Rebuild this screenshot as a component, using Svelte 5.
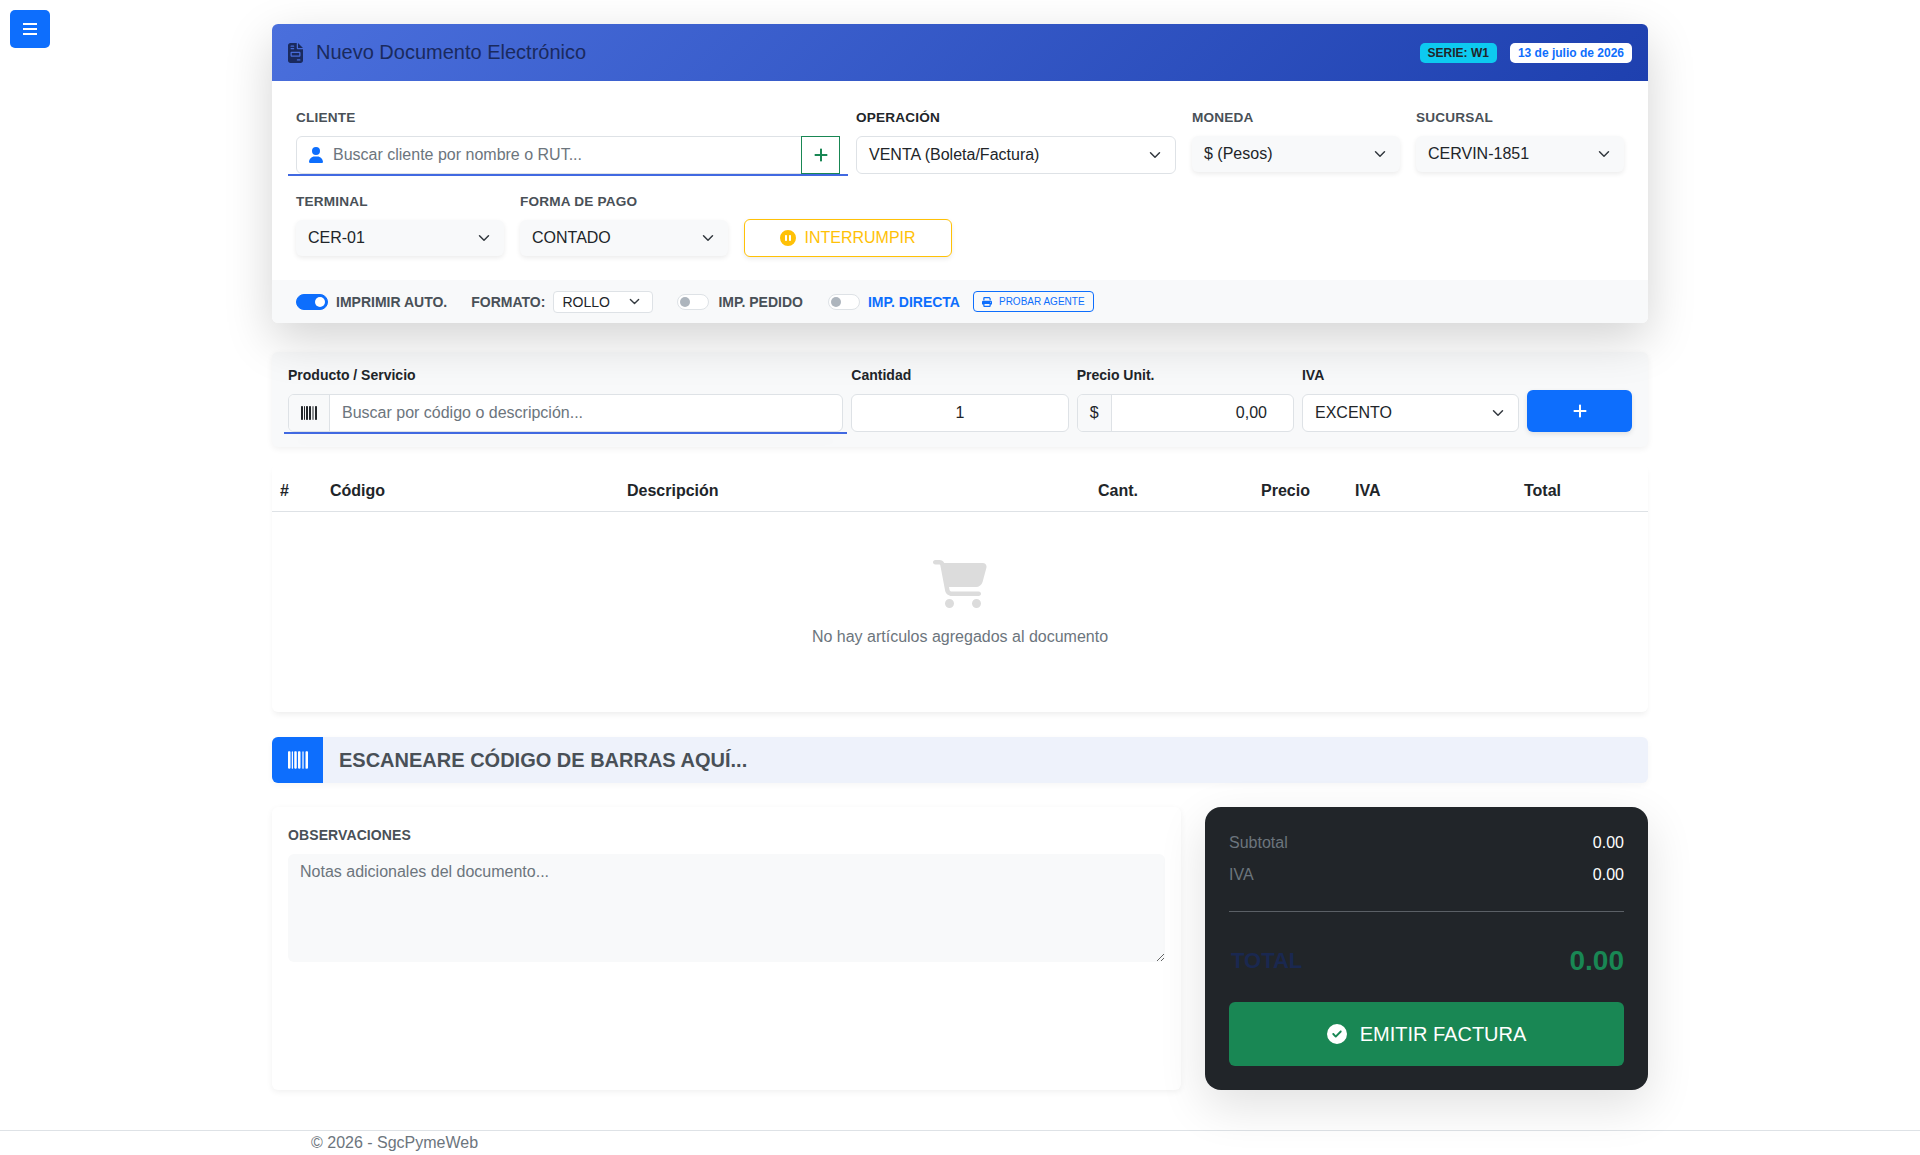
<script lang="ts">
	const columns = [
		{ name: '#', width: 50 },
		{ name: 'Código', width: 297 },
		{ name: 'Descripción', width: 471 },
		{ name: 'Cant.', width: 163 },
		{ name: 'Precio', width: 94 },
		{ name: 'IVA', width: 169 },
		{ name: 'Total', width: 124 }
	];
	const chevron = 'M2 5l6 6 6-6';
	const barcode = 'M24 32C10.7 32 0 42.7 0 56V456c0 13.3 10.7 24 24 24H40c13.3 0 24-10.7 24-24V56c0-13.3-10.7-24-24-24H24zm88 0c-8.8 0-16 7.2-16 16V464c0 8.8 7.2 16 16 16s16-7.2 16-16V48c0-8.8-7.2-16-16-16zm72 0c-13.3 0-24 10.7-24 24V456c0 13.3 10.7 24 24 24h16c13.3 0 24-10.7 24-24V56c0-13.3-10.7-24-24-24H184zm96 0c-13.3 0-24 10.7-24 24V456c0 13.3 10.7 24 24 24h16c13.3 0 24-10.7 24-24V56c0-13.3-10.7-24-24-24H280zM448 56V456c0 13.3 10.7 24 24 24h16c13.3 0 24-10.7 24-24V56c0-13.3-10.7-24-24-24H472c-13.3 0-24 10.7-24 24zm-64-24c-8.8 0-16 7.2-16 16V464c0 8.8 7.2 16 16 16s16-7.2 16-16V48c0-8.8-7.2-16-16-16z';
	const plus = 'M256 80c0-17.7-14.3-32-32-32s-32 14.3-32 32V224H48c-17.7 0-32 14.3-32 32s14.3 32 32 32H192V432c0 17.7 14.3 32 32 32s32-14.3 32-32V288H400c17.7 0 32-14.3 32-32s-14.3-32-32-32H256V80z';
</script>

{#snippet select(value: string, cls: string)}
	<div class="select {cls}">
		<span>{value}</span>
		<svg class="chev" viewBox="0 0 16 16"><path d={chevron} /></svg>
	</div>
{/snippet}

<button class="menu-btn" aria-label="menu">
	<svg viewBox="0 0 14 12"><rect y="0" width="14" height="2" /><rect y="5" width="14" height="2" /><rect y="10" width="14" height="2" /></svg>
</button>

<main class="page">
	<section class="doc-card">
		<header class="doc-head">
			<svg class="doc-icon" viewBox="0 0 384 512"><path d="M64 0C28.7 0 0 28.7 0 64V448c0 35.3 28.7 64 64 64H320c35.3 0 64-28.7 64-64V160H256c-17.7 0-32-14.3-32-32V0H64zM256 0V128H384L256 0zM80 64h64c8.8 0 16 7.2 16 16s-7.2 16-16 16H80c-8.8 0-16-7.2-16-16s7.2-16 16-16zm0 64h64c8.8 0 16 7.2 16 16s-7.2 16-16 16H80c-8.8 0-16-7.2-16-16s7.2-16 16-16zm16 96H288c17.7 0 32 14.3 32 32v64c0 17.7-14.3 32-32 32H96c-17.7 0-32-14.3-32-32V256c0-17.7 14.3-32 32-32zm0 32v64H288V256H96zM240 416h64c8.8 0 16 7.2 16 16s-7.2 16-16 16H240c-8.8 0-16-7.2-16-16s7.2-16 16-16z" /></svg>
			<h1>Nuevo Documento Electrónico</h1>
			<span class="badge serie">SERIE: W1</span>
			<span class="badge fecha">13 de julio de 2026</span>
		</header>

		<div class="doc-body">
			<div class="field c5 underlined">
				<span class="lbl">CLIENTE</span>
				<div class="client-group">
					<svg class="user-icon" viewBox="0 0 448 512"><path d="M224 256A128 128 0 1 0 224 0a128 128 0 1 0 0 256zm-45.7 48C79.8 304 0 383.8 0 482.3C0 498.7 13.3 512 29.7 512H418.3c16.4 0 29.7-13.3 29.7-29.7C448 383.8 368.2 304 269.7 304H178.3z" /></svg>
					<input placeholder="Buscar cliente por nombre o RUT..." />
					<button class="add-client" aria-label="nuevo cliente">
						<svg viewBox="0 0 448 512"><path d={plus} /></svg>
					</button>
				</div>
			</div>
			<div class="field c3">
				<span class="lbl dark">OPERACIÓN</span>
				{@render select('VENTA (Boleta/Factura)', 'outlined')}
			</div>
			<div class="field c2">
				<span class="lbl">MONEDA</span>
				{@render select('$ (Pesos)', 'soft')}
			</div>
			<div class="field c2">
				<span class="lbl">SUCURSAL</span>
				{@render select('CERVIN-1851', 'soft')}
			</div>
			<div class="field c2">
				<span class="lbl">TERMINAL</span>
				{@render select('CER-01', 'soft')}
			</div>
			<div class="field c2">
				<span class="lbl">FORMA DE PAGO</span>
				{@render select('CONTADO', 'soft')}
			</div>
			<div class="field c2 action">
				<button class="pause-btn">
					<svg viewBox="0 0 512 512"><path d="M256 512A256 256 0 1 0 256 0a256 256 0 1 0 0 512zM224 192V320c0 17.7-14.3 32-32 32s-32-14.3-32-32V192c0-17.7 14.3-32 32-32s32 14.3 32 32zm128 0V320c0 17.7-14.3 32-32 32s-32-14.3-32-32V192c0-17.7 14.3-32 32-32s32 14.3 32 32z" /></svg>
					INTERRUMPIR
				</button>
			</div>
		</div>

		<div class="doc-options">
			<span class="switch on"></span>
			<span class="opt-lbl first">IMPRIMIR AUTO.</span>
			<span class="opt-lbl formato">FORMATO:</span>
			<div class="mini-select">
				<span>ROLLO</span>
				<svg class="chev" viewBox="0 0 16 16"><path d={chevron} /></svg>
			</div>
			<span class="switch sw2"></span>
			<span class="opt-lbl wide">IMP. PEDIDO</span>
			<span class="switch sw3"></span>
			<span class="opt-lbl blue">IMP. DIRECTA</span>
			<button class="agent-btn">
				<svg viewBox="0 0 512 512"><path d="M128 0C92.7 0 64 28.7 64 64v96h64V64H354.7L384 93.3V160h64V93.3c0-17-6.7-33.3-18.7-45.3L400 18.7C388 6.7 371.7 0 354.7 0H128zM384 352v32 64H128V384 368 352H384zm64 32h32c17.7 0 32-14.3 32-32V256c0-35.3-28.7-64-64-64H64c-35.3 0-64 28.7-64 64v96c0 17.7 14.3 32 32 32H64v64c0 35.3 28.7 64 64 64H384c35.3 0 64-28.7 64-64V384zM432 248a24 24 0 1 1 0 48 24 24 0 1 1 0-48z" /></svg>
				PROBAR AGENTE
			</button>
		</div>
	</section>

	<section class="line-panel">
		<div class="line-col underlined-2">
			<span class="line-lbl">Producto / Servicio</span>
			<div class="group">
				<span class="addon bar"><svg viewBox="0 0 512 512"><path d={barcode} /></svg></span>
				<input placeholder="Buscar por código o descripción..." />
			</div>
		</div>
		<div class="line-col">
			<span class="line-lbl">Cantidad</span>
			<div class="group"><input class="center" value="1" /></div>
		</div>
		<div class="line-col">
			<span class="line-lbl">Precio Unit.</span>
			<div class="group">
				<span class="addon dollar">$</span>
				<input class="right" value="0,00" />
			</div>
		</div>
		<div class="line-col">
			<span class="line-lbl">IVA</span>
			{@render select('EXCENTO', 'outlined')}
		</div>
		<div class="line-col end">
			<button class="add-line" aria-label="agregar">
				<svg viewBox="0 0 448 512"><path d={plus} /></svg>
			</button>
		</div>
	</section>

	<section class="items">
		<div class="items-head">
			{#each columns as col}
				<span style="width: {col.width}px">{col.name}</span>
			{/each}
		</div>
		<div class="items-empty">
			<svg viewBox="0 0 576 512"><path d="M0 24C0 10.7 10.7 0 24 0H69.5c22 0 41.5 12.8 50.6 32h411c26.3 0 45.5 25 38.6 50.4l-41 152.3c-8.5 31.4-37 53.3-69.5 53.3H170.7l5.4 28.5c2.2 11.3 12.1 19.5 23.6 19.5H488c13.3 0 24 10.7 24 24s-10.7 24-24 24H199.7c-34.6 0-64.3-24.6-70.7-58.5L77.4 54.5c-.7-3.8-4-6.5-7.9-6.5H24C10.7 48 0 37.3 0 24zM128 464a48 48 0 1 1 96 0 48 48 0 1 1 -96 0zm336-48a48 48 0 1 1 0 96 48 48 0 1 1 0-96z" /></svg>
			<p>No hay artículos agregados al documento</p>
		</div>
	</section>

	<section class="scan-bar">
		<span class="scan-icon"><svg viewBox="0 0 512 512"><path d={barcode} /></svg></span>
		<span class="scan-text">ESCANEARE CÓDIGO DE BARRAS AQUÍ...</span>
	</section>

	<section class="bottom">
		<div class="notes">
			<span class="lbl">OBSERVACIONES</span>
			<textarea placeholder="Notas adicionales del documento..."></textarea>
		</div>
		<div class="totals">
			<div class="tot-row"><span class="muted">Subtotal</span><span>0.00</span></div>
			<div class="tot-row"><span class="muted">IVA</span><span>0.00</span></div>
			<hr />
			<div class="tot-main"><span class="tot-label">TOTAL</span><span class="tot-value">0.00</span></div>
			<button class="emit">
				<svg viewBox="0 0 512 512"><path d="M256 512A256 256 0 1 0 256 0a256 256 0 1 0 0 512zM369 209L241 337c-9.4 9.4-24.6 9.4-33.9 0l-64-64c-9.4-9.4-9.4-24.6 0-33.9s24.6-9.4 33.9 0l47 47L335 175c9.4-9.4 24.6-9.4 33.9 0s9.4 24.6 0 33.9z" /></svg>
				EMITIR FACTURA
			</button>
		</div>
	</section>
</main>

<footer class="foot">© 2026 - SgcPymeWeb</footer>

<style>
	:global(body) {
		margin: 0;
		background: #fff;
		color: #212529;
		font-family: 'Liberation Sans', Arial, sans-serif;
		font-size: 16px;
	}

	button {
		font-family: inherit;
		cursor: pointer;
	}

	input,
	textarea {
		font-family: inherit;
		font-size: 16px;
		color: #212529;
		outline: none;
	}

	input::placeholder,
	textarea::placeholder {
		color: #6c757d;
		opacity: 1;
	}

	.menu-btn {
		position: absolute;
		left: 10px;
		top: 10px;
		width: 40px;
		height: 38px;
		padding: 0;
		border: 0;
		border-radius: 5px;
		background: #0d6efd;
		display: flex;
		align-items: center;
		justify-content: center;
	}

	.menu-btn svg {
		width: 14px;
		height: 12px;
		fill: #fff;
	}

	.page {
		width: 1376px;
		margin: 0 auto;
		padding-top: 24px;
	}

	.doc-card {
		position: relative;
		z-index: 1;
		border-radius: 6px;
		background: #fff;
		box-shadow: 0 16px 48px rgba(0, 0, 0, 0.175);
		overflow: hidden;
	}

	.doc-head {
		height: 57px;
		box-sizing: border-box;
		padding: 0 16px;
		display: flex;
		align-items: center;
		background: linear-gradient(135deg, #4a6fdc, #1e40af);
		color: #1a2a5e;
	}

	.doc-icon {
		width: 15px;
		height: 20px;
		fill: #1a2a5e;
		margin-right: 13px;
	}

	.doc-head h1 {
		margin: 0;
		font-size: 20px;
		font-weight: 400;
		flex: 1;
	}

	.badge {
		height: 20px;
		line-height: 20px;
		border-radius: 5px;
		padding: 0 8px;
		font-size: 12px;
		font-weight: 700;
	}

	.serie {
		background: #0dcaf0;
		color: #212529;
		margin-right: 13px;
	}

	.fecha {
		background: #fff;
		color: #0d6efd;
	}

	.doc-body {
		display: grid;
		grid-template-columns: repeat(12, 1fr);
		padding: 27px 16px 0;
		height: 199px;
		box-sizing: border-box;
		align-content: start;
		row-gap: 18px;
	}

	.field {
		padding: 0 8px;
		position: relative;
	}

	.c5 {
		grid-column: span 5;
	}

	.c3 {
		grid-column: span 3;
	}

	.c2 {
		grid-column: span 2;
	}

	.action {
		padding-top: 27px;
	}

	.lbl {
		display: block;
		font-size: 13.6px;
		line-height: 20px;
		font-weight: 700;
		color: #495057;
		letter-spacing: 0.2px;
		margin-bottom: 8px;
	}

	.lbl.dark {
		color: #212529;
	}

	.client-group {
		height: 38px;
		box-sizing: border-box;
		border: 1px solid #dee2e6;
		border-radius: 6px;
		display: flex;
		align-items: center;
		background: #fff;
	}

	.user-icon {
		width: 14px;
		height: 16px;
		fill: #0d6efd;
		margin-left: 12px;
		margin-right: 10px;
		flex: none;
	}

	.client-group input {
		flex: 1;
		min-width: 0;
		border: 0;
		padding: 0;
		background: transparent;
	}

	.add-client {
		width: 39px;
		height: 38px;
		margin: -1px;
		padding: 0;
		border: 1px solid #198754;
		border-radius: 0;
		background: #fff;
		display: flex;
		align-items: center;
		justify-content: center;
	}

	.add-client svg {
		width: 14px;
		height: 16px;
		fill: #198754;
	}

	.underlined::after {
		content: '';
		position: absolute;
		left: 0;
		right: 0;
		bottom: -2px;
		height: 2px;
		background: #4169e1;
	}

	.select {
		height: 38px;
		box-sizing: border-box;
		border-radius: 6px;
		display: flex;
		align-items: center;
		justify-content: space-between;
		padding: 0 14px 0 12px;
		font-size: 16px;
		color: #212529;
	}

	.select.outlined {
		border: 1px solid #dee2e6;
		background: #fff;
	}

	.select.soft {
		height: 36px;
		background: #f8f9fa;
		box-shadow: 0 2px 5px rgba(0, 0, 0, 0.08);
	}

	.chev {
		width: 12px;
		height: 12px;
		fill: none;
		stroke: #343a40;
		stroke-width: 2;
		stroke-linecap: round;
		stroke-linejoin: round;
		flex: none;
	}

	.pause-btn {
		width: 100%;
		height: 38px;
		padding: 0;
		border: 1px solid #ffc107;
		border-radius: 6px;
		background: #fff;
		color: #ffc107;
		font-size: 16px;
		display: flex;
		align-items: center;
		justify-content: center;
		box-shadow: 0 2px 5px rgba(0, 0, 0, 0.08);
	}

	.pause-btn svg {
		width: 16px;
		height: 16px;
		fill: #ffc107;
		margin-right: 8px;
	}

	.doc-options {
		height: 43px;
		box-sizing: border-box;
		padding: 0 24px;
		display: flex;
		align-items: center;
		background: #f8f9fa;
	}

	.switch {
		width: 32px;
		height: 16px;
		box-sizing: border-box;
		border: 1px solid #dee2e6;
		border-radius: 8px;
		background: #fff;
		position: relative;
		flex: none;
	}

	.switch::after {
		content: '';
		position: absolute;
		left: 2px;
		top: 2px;
		width: 10px;
		height: 10px;
		border-radius: 50%;
		background: #adb5bd;
	}

	.switch.on {
		background: #0d6efd;
		border-color: #0d6efd;
	}

	.switch.on::after {
		left: 18px;
		background: #fff;
	}

	.sw2 {
		margin-left: 24px;
	}

	.sw3 {
		margin-left: 25px;
	}

	.opt-lbl {
		font-size: 14px;
		font-weight: 700;
		color: #495057;
		margin-left: 8px;
	}

	.opt-lbl.wide {
		margin-left: 9px;
	}

	.opt-lbl.formato {
		margin-left: 24px;
		margin-top: 1px;
	}

	.opt-lbl.blue {
		color: #0d6efd;
	}

	.mini-select {
		width: 100px;
		height: 22px;
		box-sizing: border-box;
		border: 1px solid #dee2e6;
		border-radius: 4px;
		background: #fff;
		margin-left: 8px;
		padding: 0 12px 0 8px;
		display: flex;
		align-items: center;
		justify-content: space-between;
		font-size: 14px;
	}

	.mini-select .chev {
		width: 11px;
		height: 11px;
	}

	.agent-btn {
		height: 21px;
		margin-left: 13px;
		padding: 0 8px;
		border: 1px solid #0d6efd;
		border-radius: 4px;
		background: transparent;
		color: #0d6efd;
		font-size: 10px;
		display: flex;
		align-items: center;
	}

	.agent-btn svg {
		width: 10px;
		height: 10px;
		fill: #0d6efd;
		margin-right: 7px;
	}

	.line-panel {
		margin-top: 29px;
		height: 95px;
		box-sizing: border-box;
		padding: 12px 12px 0;
		border-radius: 6px;
		background: #f8f9fa;
		box-shadow: 0 2px 6px rgba(0, 0, 0, 0.06);
		display: grid;
		grid-template-columns: 5fr 2fr 2fr 2fr 1fr;
		position: relative;
	}

	.line-col {
		display: flex;
		flex-direction: column;
		min-width: 0;
		padding: 0 4px;
		position: relative;
	}

	.line-col.end {
		justify-content: flex-end;
		padding-bottom: 15px;
	}

	.underlined-2::after {
		content: '';
		position: absolute;
		left: 0;
		right: 0;
		top: 68px;
		height: 2px;
		background: #4169e1;
		box-shadow: 0 8px 20px rgba(0, 0, 0, 0.05);
	}

	.line-lbl {
		font-size: 14px;
		line-height: 22px;
		font-weight: 700;
		margin-bottom: 8px;
	}

	.group {
		height: 38px;
		box-sizing: border-box;
		border: 1px solid #dee2e6;
		border-radius: 6px;
		background: #fff;
		display: flex;
		overflow: hidden;
	}

	.group input {
		flex: 1;
		min-width: 0;
		border: 0;
		padding: 0 12px;
		background: transparent;
	}

	.group input.center {
		text-align: center;
	}

	.group input.right {
		text-align: right;
		padding-right: 26px;
	}

	.addon {
		background: #f8f9fa;
		border-right: 1px solid #dee2e6;
		display: flex;
		align-items: center;
		justify-content: center;
		flex: none;
	}

	.addon.bar {
		width: 40px;
	}

	.addon.bar svg {
		width: 16px;
		height: 16px;
		fill: #212529;
	}

	.addon.dollar {
		width: 33px;
	}

	.add-line {
		height: 42px;
		padding: 0;
		border: 0;
		border-radius: 6px;
		background: #0d6efd;
		display: flex;
		align-items: center;
		justify-content: center;
		box-shadow: 0 2px 5px rgba(0, 0, 0, 0.1);
	}

	.add-line svg {
		width: 14px;
		height: 16px;
		fill: #fff;
	}

	.items {
		margin-top: 17px;
		height: 248px;
		border-radius: 6px;
		background: #fff;
		box-shadow: 0 4px 6px -2px rgba(0, 0, 0, 0.08);
		overflow: hidden;
	}

	.items-head {
		height: 48px;
		box-sizing: border-box;
		padding: 6px 0 0 8px;
		border-bottom: 1px solid #dee2e6;
		display: flex;
		align-items: center;
		font-weight: 700;
	}

	.items-empty {
		display: flex;
		flex-direction: column;
		align-items: center;
		padding-top: 48px;
	}

	.items-empty svg {
		width: 54px;
		height: 48px;
		fill: #dcdcdc;
	}

	.items-empty p {
		margin: 20px 0 0;
		color: #6c757d;
	}

	.scan-bar {
		margin-top: 25px;
		height: 46px;
		border-radius: 6px;
		background: #eef2fb;
		display: flex;
		align-items: center;
		box-shadow: 0 2px 6px rgba(0, 0, 0, 0.04);
		overflow: hidden;
	}

	.scan-icon {
		width: 51px;
		height: 46px;
		background: #0d6efd;
		display: flex;
		align-items: center;
		justify-content: center;
	}

	.scan-icon svg {
		width: 20px;
		height: 20px;
		fill: #fff;
	}

	.scan-text {
		margin-left: 16px;
		font-size: 20px;
		font-weight: 700;
		color: #495057;
	}

	.bottom {
		margin-top: 24px;
		display: grid;
		grid-template-columns: 909px 443px;
		column-gap: 24px;
		height: 283px;
	}

	.notes {
		padding: 18px 16px 0;
		border-radius: 6px;
		background: #fff;
		box-shadow: 0 2px 6px rgba(0, 0, 0, 0.06);
	}

	.notes .lbl {
		font-size: 14px;
		letter-spacing: 0.1px;
		margin-bottom: 9px;
	}

	.notes textarea {
		display: block;
		width: 100%;
		height: 108px;
		box-sizing: border-box;
		padding: 9px 12px;
		border: 0;
		border-radius: 6px;
		background: #f8f9fa;
	}

	.totals {
		padding: 24px;
		box-sizing: border-box;
		border-radius: 16px;
		background: #212529;
		color: #fff;
		box-shadow: 0 16px 48px rgba(0, 0, 0, 0.12);
	}

	.tot-row {
		display: flex;
		justify-content: space-between;
		line-height: 24px;
		margin-bottom: 8px;
	}

	.muted {
		color: #6c757d;
	}

	.totals hr {
		margin: 24px 0 0;
		border: 0;
		border-top: 1px solid #5b6066;
	}

	.tot-main {
		display: flex;
		justify-content: space-between;
		align-items: center;
		margin-top: 32px;
		height: 34px;
	}

	.tot-label {
		font-size: 22px;
		font-weight: 700;
		color: #1a2850;
		padding-left: 2px;
	}

	.tot-value {
		font-size: 28px;
		font-weight: 700;
		color: #198754;
	}

	.emit {
		width: 100%;
		height: 64px;
		margin-top: 24px;
		padding: 0;
		border: 0;
		border-radius: 6px;
		background: #198754;
		color: #fff;
		font-size: 20px;
		display: flex;
		align-items: center;
		justify-content: center;
	}

	.emit svg {
		width: 20px;
		height: 20px;
		fill: #fff;
		margin-right: 13px;
	}

	.foot {
		margin-top: 40px;
		height: 25px;
		box-sizing: border-box;
		padding-left: 311px;
		border-top: 1px solid #dee2e6;
		font-size: 16px;
		line-height: 24px;
		color: #6c757d;
	}
</style>
